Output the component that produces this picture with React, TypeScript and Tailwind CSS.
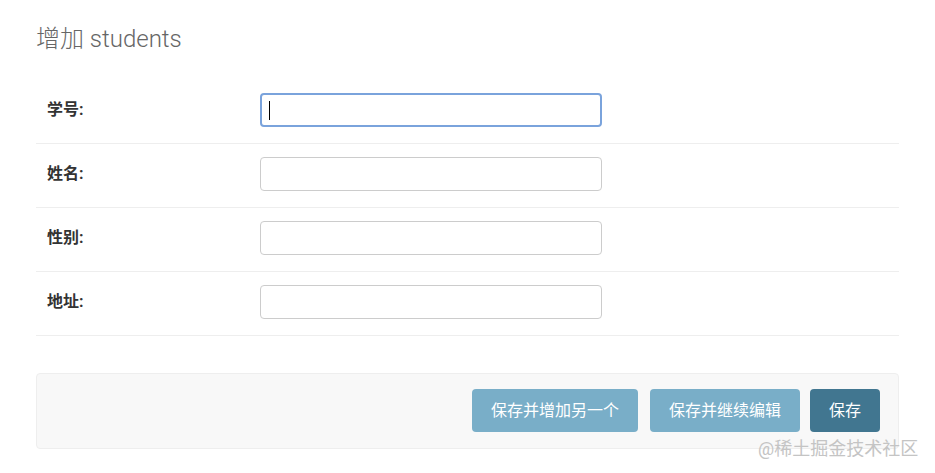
export default function App() {
  const fields = ["学号:", "姓名:", "性别:", "地址:"];

  return (
    <div
      className="relative w-[935px] h-[473px] bg-white overflow-hidden"
      style={{ fontFamily: '"Roboto", "Noto Sans CJK SC", sans-serif' }}
    >
      <div className="px-[36px] pt-[23px]">
        <h1 className="text-[24px] leading-[32px] font-light text-[#666] mb-[25px]">
          增加 students
        </h1>

        {/* Fields */}
        <div>
          {fields.map((label, i) => (
            <div
              key={label}
              className="flex items-center pl-[11px] pt-[13px] pb-[16px] border-b border-[#eee]"
            >
              <label className="w-[213px] text-[16px] font-bold text-[#333]">{label}</label>
              <div className="relative">
                <input
                  type="text"
                  className={`w-[342px] h-[34px] rounded-[4px] bg-white px-2 outline-none ${
                    i === 0
                      ? "border-2 border-[#7aa3dc]"
                      : "border border-[#ccc]"
                  }`}
                />
                {i === 0 && (
                  <span className="absolute left-[9px] top-[8px] w-px h-[19px] bg-black" />
                )}
              </div>
            </div>
          ))}
        </div>

        {/* Submit row */}
        <div className="mt-[37px] flex justify-end bg-[#f8f8f8] border border-[#eee] rounded-[4px] pt-[15px] pb-[16px] pr-[18px]">
          <button className="h-[43px] px-[19px] rounded-[4px] bg-[#79aec8] text-white text-[16px]">
            保存并增加另一个
          </button>
          <button className="ml-[12px] h-[43px] px-[19px] rounded-[4px] bg-[#79aec8] text-white text-[16px]">
            保存并继续编辑
          </button>
          <button className="ml-[10px] h-[43px] px-[19px] rounded-[4px] bg-[#417690] text-white text-[16px]">
            保存
          </button>
        </div>
      </div>

      {/* watermark */}
      <div className="absolute left-[758px] top-[435px] text-[18px] text-[#c4c4c4]">
        @稀土掘金技术社区
      </div>
    </div>
  );
}
